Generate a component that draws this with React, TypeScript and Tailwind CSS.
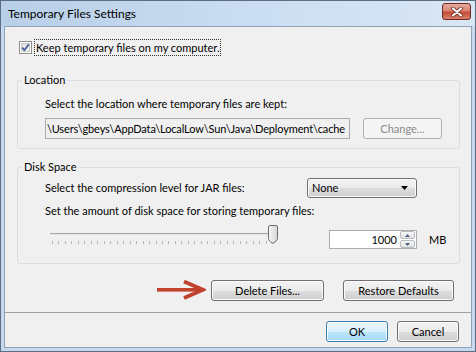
import React from "react";

const btn =
  "flex items-center justify-center rounded-[3px] border border-[#707070] bg-[linear-gradient(to_bottom,#f2f2f2_0%,#ebebeb_50%,#dddddd_51%,#cfcfcf_100%)] shadow-[inset_0_0_0_1px_#fbfbfb] text-black";

function Check() {
  return (
    <svg width="13" height="13" viewBox="0 0 13 13" className="block">
      <defs>
        <linearGradient id="cbg" x1="0" y1="0" x2="1" y2="1">
          <stop offset="0" stopColor="#dcdcdc" />
          <stop offset="1" stopColor="#fbfbfb" />
        </linearGradient>
      </defs>
      <rect x="0.5" y="0.5" width="12" height="12" fill="#fff" stroke="#8f8f8f" />
      <rect x="2.5" y="2.5" width="8" height="8" fill="url(#cbg)" stroke="#c8c8c8" />
      <path d="M3.2 6.6 L5.4 9.2 L9.8 3.2" fill="none" stroke="#4a5f97" strokeWidth="1.8" strokeLinejoin="round" />
    </svg>
  );
}

function Slider() {
  const ticks = [] as number[];
  const n = 34;
  for (let i = 0; i <= n; i++) ticks.push(Math.round(7 + (220 * i) / n) + 0.5);
  return (
    <svg width="240" height="26" viewBox="0 0 240 26" className="block">
      <defs>
        <linearGradient id="thumb" x1="0" y1="0" x2="1" y2="0">
          <stop offset="0" stopColor="#f6f6f6" />
          <stop offset="1" stopColor="#d4d4d4" />
        </linearGradient>
      </defs>
      <rect x="5" y="9" width="225" height="1" fill="#a8a8a8" />
      <rect x="5" y="10" width="225" height="1" fill="#e4e4e4" />
      {ticks.map((x, i) => (
        <line key={i} x1={x} x2={x} y1="17" y2="20" stroke="#b4b4b4" strokeWidth="1" />
      ))}
      <path
        d="M223.5 3 Q223.5 1.5 225 1.5 H231 Q232.5 1.5 232.5 3 V14.5 Q232.5 16 231 17.2 L228 19.2 L227 19.2 L224.8 17.2 Q223.5 16 223.5 14.5 Z"
        fill="url(#thumb)"
        stroke="#6f6f6f"
      />
    </svg>
  );
}

function RedArrow() {
  return (
    <svg width="49" height="21" viewBox="0 0 49 21" className="block">
      <rect x="0" y="8" width="43" height="3.6" fill="#c1432d" />
      <polyline points="27,1.5 46,9.8 27,18" fill="none" stroke="#c1432d" strokeWidth="3.8" strokeLinejoin="miter" />
    </svg>
  );
}

export default function App() {
  return (
    <div className="w-[476px] h-[352px] bg-[#c6d9ee] border border-[#5d6e82] flex flex-col text-[11px] leading-[16px] text-black font-['Lato',sans-serif] overflow-hidden">
      {/* Title bar */}
      <div className="h-[25px] flex items-center pl-[7px] pr-[4px] bg-[linear-gradient(to_right,#b8cfe8,#cddff2_60%,#d9e6f4)]">
        <span className="text-[12px] text-black">Temporary Files Settings</span>
        <div className="ml-auto mt-[-4px] w-[29px] h-[17px] rounded-[3px] border border-[#6e2a22] bg-[linear-gradient(to_bottom,#e7a99c_0%,#d98572_45%,#c44b36_55%,#d8826b_100%)] flex items-center justify-center">
          <svg width="12" height="10" viewBox="0 0 12 10">
            <path d="M2 1.5 L10 8.5 M10 1.5 L2 8.5" stroke="#5b1c14" strokeWidth="3.6" strokeLinecap="round" />
            <path d="M2 1.5 L10 8.5 M10 1.5 L2 8.5" stroke="#ffffff" strokeWidth="2.2" strokeLinecap="round" />
          </svg>
        </div>
      </div>

      {/* Client */}
      <div className="mx-[3px] flex-1 border border-[#8ea2b8] bg-[#f0f0f0] flex flex-col">
        <div className="pl-[12px] pr-[11px] flex flex-col">
          {/* checkbox row */}
          <div className="mt-[12px] h-[16px] flex items-center pl-[2px]">
            <Check />
            <span className="ml-[3px] px-[1px] h-[15px] flex items-center outline outline-1 outline-dotted outline-[#333] leading-[15px]">
              Keep temporary files on my computer.
            </span>
          </div>

          {/* Location */}
          <fieldset className="mt-[17px] border border-[#d5dfe5] rounded-[3px]">
            <legend className="ml-[4px] px-[2px] h-[16px] leading-[16px]">Location</legend>
            <div className="pl-[27px] pr-[17px] pb-[9px]">
              <div className="mt-[8px] h-[16px]">Select the location where temporary files are kept:</div>
              <div className="mt-[6px] flex items-center">
                <div className="w-[305px] h-[21px] border border-[#a5acb5] bg-[#f0f0f0] flex items-center pl-[1px] overflow-hidden whitespace-nowrap tracking-[-0.15px]">
                  \Users\gbeys\AppData\LocalLow\Sun\Java\Deployment\cache
                </div>
                <div className="ml-[13px] w-[79px] h-[21px] rounded-[3px] border border-[#adb2b5] bg-[#f4f4f4] text-[#8a8a8a] flex items-center justify-center">
                  Change...
                </div>
              </div>
            </div>
          </fieldset>

          {/* Disk Space */}
          <fieldset className="mt-[10px] border border-[#d5dfe5] rounded-[3px]">
            <legend className="ml-[4px] px-[2px] h-[16px] leading-[16px]">Disk Space</legend>
            <div className="pl-[27px] pb-[13px]">
              <div className="mt-[3px] h-[20px] flex items-center">
                <span>Select the compression level for JAR files:</span>
                <div className={"ml-auto mr-[42px] w-[110px] h-[20px] !justify-start pl-[4px] pr-[8px] " + btn}>
                  <span>None</span>
                  <svg width="7" height="4" viewBox="0 0 7 4" className="ml-auto">
                    <path d="M0 0 H7 L3.5 4 Z" fill="#000" />
                  </svg>
                </div>
              </div>
              <div className="mt-[5px] h-[16px]">Set the amount of disk space for storing temporary files:</div>
              <div className="mt-[5px] h-[26px] flex items-start">
                <Slider />
                <div className="ml-auto mt-[6px] w-[88px] h-[19px] border border-[#abadb3] bg-white flex items-center">
                  <span className="flex-1 text-right pr-[3px]">1000</span>
                  <div className="w-[15px] h-[17px] flex flex-col mr-[1px]">
                    <div className="h-[8px] border border-[#b9bdc3] rounded-[2px] bg-[linear-gradient(to_bottom,#f6f6f6,#e2e2e2)] flex items-center justify-center">
                      <svg width="5" height="3" viewBox="0 0 5 3"><path d="M0 3 L2.5 0 L5 3 Z" fill="#4f6483" /></svg>
                    </div>
                    <div className="mt-[1px] h-[8px] border border-[#b9bdc3] rounded-[2px] bg-[linear-gradient(to_bottom,#f6f6f6,#e2e2e2)] flex items-center justify-center">
                      <svg width="5" height="3" viewBox="0 0 5 3"><path d="M0 0 L2.5 3 L5 0 Z" fill="#4f6483" /></svg>
                    </div>
                  </div>
                </div>
                <span className="mt-[8px] ml-[12px] w-[30px]">MB</span>
              </div>
            </div>
          </fieldset>
        </div>

        {/* Delete / Restore */}
        <div className="mt-[16px] h-[21px] flex items-center justify-end pr-[17px]">
          <RedArrow />
          <div className={"ml-[5px] w-[113px] h-[21px] " + btn}>Delete Files...</div>
          <div className={"ml-[19px] w-[111px] h-[21px] " + btn}>Restore Defaults</div>
        </div>

        <div className="mt-[11px] h-[1px] bg-[#a0a0a0]" />

        <div className="mt-[8px] h-[21px] flex items-center justify-end pr-[12px]">
          <div className="w-[62px] h-[21px] flex items-center justify-center rounded-[3px] border border-[#3c7fb1] bg-[linear-gradient(to_bottom,#eaf6fd_0%,#d9f0fc_50%,#bee6fd_51%,#a7d9f5_100%)] shadow-[inset_0_0_0_1px_#f4fbff]">
            OK
          </div>
          <div className={"ml-[9px] w-[62px] h-[21px] " + btn}>Cancel</div>
        </div>
      </div>
      <div className="h-[3px]" />
    </div>
  );
}
